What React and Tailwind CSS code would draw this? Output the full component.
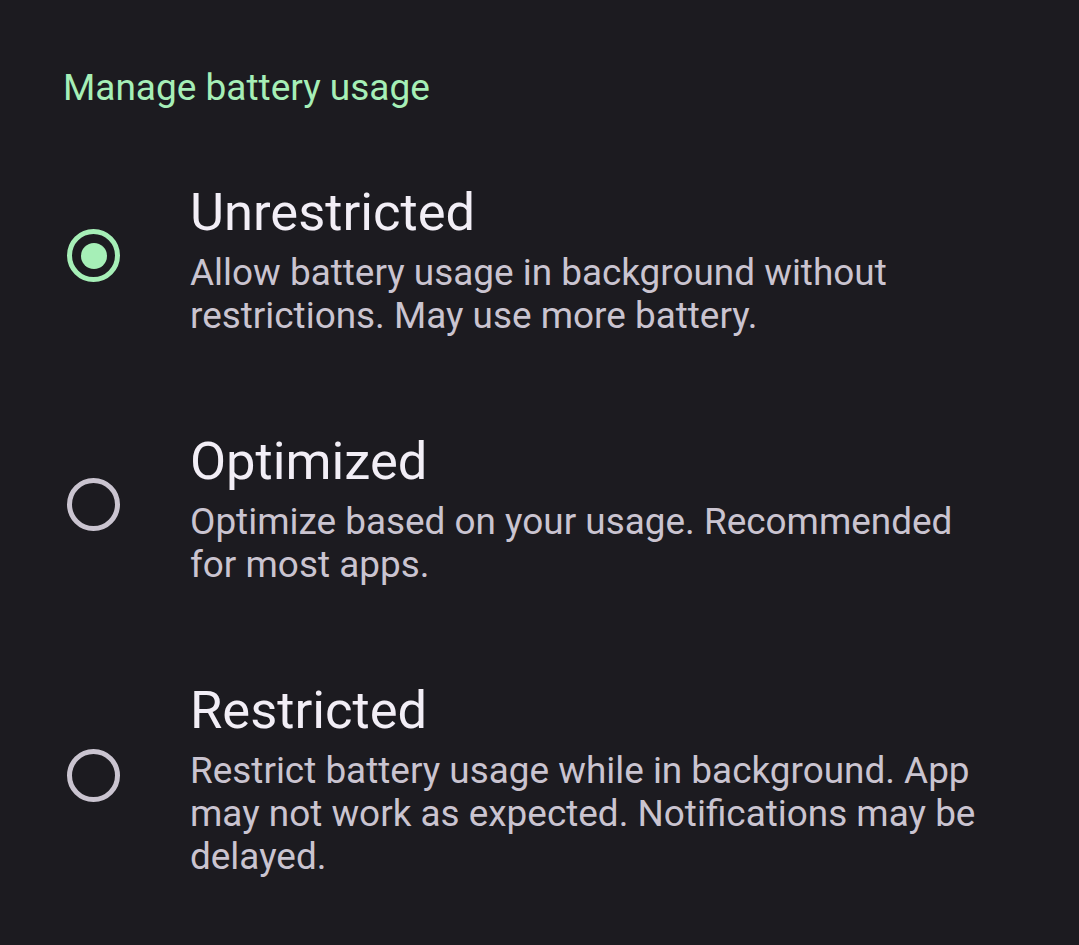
import React from "react";

const options = [
  {
    title: "Unrestricted",
    desc: "Allow battery usage in background without restrictions. May use more battery.",
    selected: true,
  },
  {
    title: "Optimized",
    desc: "Optimize based on your usage. Recommended for most apps.",
    selected: false,
  },
  {
    title: "Restricted",
    desc: "Restrict battery usage while in background. App may not work as expected. Notifications may be delayed.",
    selected: false,
  },
];

function Radio({ selected }) {
  if (selected) {
    return (
      <div className="w-[53px] h-[53px] rounded-full border-[5px] border-[#a6efb7] flex items-center justify-center shrink-0">
        <div className="w-[26px] h-[26px] rounded-full bg-[#a6efb7]" />
      </div>
    );
  }
  return (
    <div className="w-[53px] h-[53px] rounded-full border-[5px] border-[#cac4d0] shrink-0" />
  );
}

export default function App() {
  return (
    <div
      className="w-[1079px] h-[945px] bg-[#1c1b20] overflow-hidden"
      style={{ fontFamily: "Roboto, 'Noto Sans', sans-serif" }}
    >
      <div className="pl-[63px] pt-[66px] pb-[21px] text-[37px] leading-[44px] text-[#a6efb7]">
        Manage battery usage
      </div>
      {options.map((o) => (
        <div key={o.title} className="flex items-center py-[43px] pl-[67px] pr-[80px]">
          <Radio selected={o.selected} />
          <div className="ml-[70px] flex flex-col">
            <div className="text-[52.5px] leading-[77px] text-[#f2eef6]">{o.title}</div>
            <div className="text-[36.9px] leading-[43px] text-[#cac4d0]">{o.desc}</div>
          </div>
        </div>
      ))}
    </div>
  );
}
